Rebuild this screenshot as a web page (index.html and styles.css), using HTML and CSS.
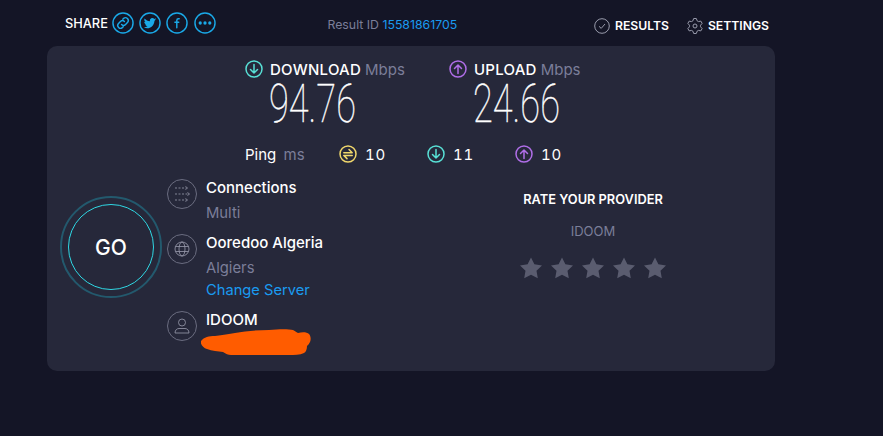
FILE: index.html
```html
<!DOCTYPE html>
<html lang="en">
<head>
    <meta charset="UTF-8">
    <meta name="viewport" content="width=device-width, initial-scale=1.0">
    <title>Speedtest Result</title>
    <link rel="stylesheet" href="styles.css">
</head>
<body>
<div class="page">
    <header class="top-bar">
        <div class="share">
            <span class="share-label">SHARE</span>
            <svg class="share-icon" viewBox="0 0 23 23"><circle cx="11.5" cy="11.5" r="10.5"/><path d="M10 13a3 3 0 0 0 4.2 0l2.2-2.2a3 3 0 0 0-4.2-4.2l-.9.9M13 10a3 3 0 0 0-4.2 0l-2.2 2.2a3 3 0 0 0 4.2 4.2l.9-.9"/></svg>
            <svg class="share-icon" viewBox="0 0 23 23"><circle cx="11.5" cy="11.5" r="10.5"/><path class="fill" d="M18 7.6c-.5.2-1 .4-1.5.4.6-.3 1-.8 1.2-1.4-.5.3-1.1.5-1.7.6a2.7 2.7 0 0 0-4.6 2.5c-2.2-.1-4.2-1.2-5.5-2.8-.7 1.2-.4 2.8.8 3.6-.4 0-.8-.1-1.2-.3 0 1.300.9 2.400 2.100 2.700-.4.100-.8.100-1.200 0 .3 1.100 1.300 1.800 2.500 1.900-1.100.9-2.500 1.200-3.900 1.100 3.700 2.300 10.300 1.200 11.200-6.500 0-.2.900-.9 1.800-1.800z"/></svg>
            <svg class="share-icon" viewBox="0 0 23 23"><circle cx="11.5" cy="11.5" r="10.5"/><path d="M13.8 7h-.8c-1.100 0-1.700.7-1.700 1.800V16.500M9.300 10.800h4"/></svg>
            <svg class="share-icon" viewBox="0 0 23 23"><circle cx="11.5" cy="11.5" r="10.5"/><circle class="fill" cx="6.5" cy="11.5" r="1.7"/><circle class="fill" cx="11.5" cy="11.5" r="1.7"/><circle class="fill" cx="16.5" cy="11.5" r="1.7"/></svg>
        </div>
        <div class="result-id">Result ID <a class="result-link">15581861705</a></div>
        <nav class="top-nav">
            <span class="nav-item">
                <svg class="nav-icon" viewBox="0 0 16 16"><circle cx="8" cy="8" r="7.3"/><path d="M5 8.300l2.200 2.100L11 6"/></svg>
                RESULTS
            </span>
            <span class="nav-item">
                <svg class="nav-icon" viewBox="0 0 16 16"><circle cx="8" cy="8" r="2"/><polygon points="6.68,.52 9.32,.52 10.1,2.81 11.44,3.58 13.82,3.12 15.14,5.4 13.54,7.22 13.54,8.78 15.14,10.6 13.82,12.88 11.44,12.42 10.1,13.19 9.32,15.48 6.68,15.48 5.9,13.19 4.56,12.42 2.18,12.88 .86,10.6 2.46,8.78 2.46,7.22 .86,5.4 2.18,3.12 4.56,3.58 5.9,2.81"/></svg>
                SETTINGS
            </span>
        </nav>
    </header>

    <main class="card">
        <section class="speeds">
            <div class="speed">
                <div class="speed-head">
                    <svg class="stat-icon teal" viewBox="0 0 18 18"><circle cx="9" cy="9" r="8"/><path d="M9 4.500v8.500M5.500 9.500L9 13l3.500-3.500"/></svg>
                    <span class="speed-name">DOWNLOAD</span> <span class="unit">Mbps</span>
                </div>
                <div class="speed-value"><span class="digits">94.76</span></div>
            </div>
            <div class="speed">
                <div class="speed-head">
                    <svg class="stat-icon purple" viewBox="0 0 18 18"><circle cx="9" cy="9" r="8"/><path d="M9 13.500V5M5.500 8.500L9 5l3.500 3.500"/></svg>
                    <span class="speed-name">UPLOAD</span> <span class="unit">Mbps</span>
                </div>
                <div class="speed-value"><span class="digits">24.66</span></div>
            </div>
        </section>

        <section class="ping-row">
            <div class="ping-label">Ping <span class="unit ping-unit">ms</span></div>
            <div class="ping-stat">
                <svg class="stat-icon yellow" viewBox="0 0 18 18"><circle cx="9" cy="9" r="8"/><path d="M4.800 7.800h8.400L10 4.500M13.200 10.400H4.800L8 13.600"/></svg>
                <span>10</span>
            </div>
            <div class="ping-stat">
                <svg class="stat-icon teal" viewBox="0 0 18 18"><circle cx="9" cy="9" r="8"/><path d="M9 4.500v8.500M5.500 9.500L9 13l3.500-3.500"/></svg>
                <span>11</span>
            </div>
            <div class="ping-stat">
                <svg class="stat-icon purple" viewBox="0 0 18 18"><circle cx="9" cy="9" r="8"/><path d="M9 13.500V5M5.500 8.500L9 5l3.500 3.500"/></svg>
                <span>10</span>
            </div>
        </section>

        <section class="details">
            <div class="go-wrap">
                <div class="go-ring"><div class="go-btn">GO</div></div>
            </div>

            <div class="servers">
                <div class="server server-conn">
                    <svg class="server-icon" viewBox="0 0 30 30"><circle cx="15" cy="15" r="14.500"/><g class="thin"><path d="M8 9h11M8 15h13M8 21h11" stroke-dasharray="2 1.500"/><path d="M18.500 7.500l2 1.500-2 1.500M20.500 13.500l2 1.500-2 1.500M18.500 19.500l2 1.500-2 1.500"/></g></svg>
                    <div class="server-text">
                        <div class="server-name">Connections</div>
                        <div class="server-sub">Multi</div>
                    </div>
                </div>
                <div class="server server-host">
                    <svg class="server-icon" viewBox="0 0 30 30"><circle cx="15" cy="15" r="14.500"/><g class="thin"><circle cx="15" cy="15" r="7"/><ellipse cx="15" cy="15" rx="3" ry="7"/><path d="M8.500 12.500h13M8.500 17.500h13"/></g></svg>
                    <div class="server-text">
                        <div class="server-name">Ooredoo Algeria</div>
                        <div class="server-sub">Algiers</div>
                        <a class="change-link">Change Server</a>
                    </div>
                </div>
                <div class="server server-isp">
                    <svg class="server-icon" viewBox="0 0 30 30"><circle cx="15" cy="15" r="14.500"/><g class="thin"><circle cx="15" cy="11.500" r="3.500"/><path d="M8 22c0-3 2-4.500 4-4.500h6c2 0 4 1.500 4 4.500z"/></g></svg>
                    <div class="server-text">
                        <div class="server-name">IDOOM</div>
                    </div>
                    <svg class="scribble" viewBox="0 0 110 26"><path d="M0 12C3 8 8 7 14 7 22 6 28 5 34 4 44 2 56 1 68 1 78 0 88 0 92 1c2 1 3 2 5 3 4-1 9-1 11 1 2 2 2 6 1 8-1 2-2 3-3 4 0 3-1 6-3 7-4 2-10 2-15 2H30c-3 0-5-1-8-3-5-1-11-1-16-3C2 19-1 15 0 12z"/></svg>
                </div>
            </div>

            <aside class="rate">
                <div class="rate-title">RATE YOUR PROVIDER</div>
                <div class="rate-isp">IDOOM</div>
                <div class="stars">
                    <svg class="star" viewBox="2 2 20 19.200"><path d="M12 2l3.090 6.260L22 9.270l-5 4.870 1.180 6.880L12 17.770l-6.180 3.250L7 14.140 2 9.270l6.910-1.010z"/></svg>
                    <svg class="star" viewBox="2 2 20 19.200"><path d="M12 2l3.090 6.260L22 9.270l-5 4.870 1.180 6.880L12 17.770l-6.180 3.250L7 14.140 2 9.270l6.910-1.010z"/></svg>
                    <svg class="star" viewBox="2 2 20 19.200"><path d="M12 2l3.090 6.260L22 9.270l-5 4.870 1.180 6.880L12 17.770l-6.180 3.250L7 14.140 2 9.270l6.910-1.010z"/></svg>
                    <svg class="star" viewBox="2 2 20 19.200"><path d="M12 2l3.090 6.260L22 9.270l-5 4.870 1.180 6.880L12 17.770l-6.180 3.250L7 14.140 2 9.270l6.910-1.010z"/></svg>
                    <svg class="star" viewBox="2 2 20 19.200"><path d="M12 2l3.090 6.260L22 9.270l-5 4.870 1.180 6.880L12 17.770l-6.180 3.250L7 14.140 2 9.270l6.910-1.010z"/></svg>
                </div>
            </aside>
        </section>
    </main>
</div>
</body>
</html>
```

FILE: styles.css
```css
* {
    margin: 0;
    padding: 0;
    box-sizing: border-box;
}

body {
    font-family: Inter, 'Open Sans', sans-serif;
    background: #141526;
    color: #fff;
    min-height: 100vh;
    overflow: hidden;
}

svg {
    display: block;
    flex: none;
    fill: none;
}

.page {
    width: 728px;
    margin-left: 47px;
}

/* Top bar */
.top-bar {
    height: 46px;
    display: flex;
    align-items: center;
    padding: 0 6px 0 18px;
    font-size: 13px;
}

.share {
    display: flex;
    align-items: center;
    width: 263px;
    margin-top: -1px;
}

.share-label {
    font-size: 12.800px;
    font-weight: 500;
    margin-right: 4px;
    margin-top: 2px;
}

.share-icon {
    width: 22px;
    height: 22px;
    margin-right: 5.300px;
    stroke: #1aa9e8;
    stroke-width: 1.500;
    stroke-linecap: round;
}

.share-icon .fill {
    fill: #1aa9e8;
    stroke: none;
}

.result-id {
    color: #7b7e99;
    width: 267px;
    font-size: 12.300px;
    margin-top: 3px;
}

.result-link {
    color: #1a9bf0;
}

.top-nav {
    display: flex;
    gap: 18px;
    margin-top: 5px;
}

.nav-item {
    display: flex;
    align-items: center;
    gap: 5px;
    font-weight: 600;
    font-size: 12.200px;
}

.nav-icon {
    width: 16px;
    height: 16px;
    stroke: #9a9cad;
    stroke-width: 1;
    stroke-linejoin: round;
}

/* Card */
.card {
    background: #26283a;
    border-radius: 10px;
    height: 325px;
    padding-top: 13px;
}

.speeds {
    display: flex;
    padding-left: 198px;
}

.speed {
    width: 204px;
}

.speed-head {
    display: flex;
    align-items: center;
    gap: 7px;
    font-size: 15px;
    height: 20px;
}

.speed-name {
    font-weight: 500;
    letter-spacing: 0.250px;
}

.unit {
    color: #7b7e99;
}

.speed-head .unit {
    margin-left: -3px;
}

.speed-value {
    height: 50px;
    padding-left: 24px;
}

.digits {
    display: inline-block;
    font-family: Roboto, sans-serif;
    font-weight: 100;
    font-size: 54px;
    line-height: 50px;
    transform: scaleX(0.67);
    transform-origin: left center;
    -webkit-text-stroke: 0.4px #fff;
}

.stat-icon {
    width: 18px;
    height: 18px;
    stroke-width: 1.500;
    stroke-linecap: round;
    stroke-linejoin: round;
}

.teal { stroke: #58e0d6; }
.purple { stroke: #b06ee8; }
.yellow { stroke: #f0d76c; }

.ping-row {
    display: flex;
    align-items: center;
    padding-left: 198px;
    margin-top: 15px;
    height: 20px;
    font-size: 15px;
}

.ping-label {
    width: 94px;
}

.ping-unit {
    margin-left: 3px;
}

.ping-stat {
    display: flex;
    align-items: center;
    gap: 8px;
    width: 88px;
    font-size: 15px;
    letter-spacing: 0.800px;
    font-variant-numeric: tabular-nums;
}

/* Lower part */
.details {
    display: flex;
    margin-top: 15px;
}

.go-wrap {
    width: 120px;
    padding: 17px 0 0 13px;
}

.go-ring {
    width: 102px;
    height: 102px;
    border: 2px solid #23596d;
    border-radius: 50%;
    display: flex;
    align-items: center;
    justify-content: center;
}

.go-btn {
    width: 86px;
    height: 86px;
    border: 1px solid #2fd8e4;
    border-radius: 50%;
    display: flex;
    align-items: center;
    justify-content: center;
    font-size: 21px;
    font-weight: 500;
}

.servers {
    width: 300px;
}

.server {
    display: flex;
    gap: 9px;
    position: relative;
}

.server-conn {
    height: 55px;
}

.server-host {
    height: 77px;
}

.server-icon {
    width: 30px;
    height: 30px;
    stroke: #6b6d80;
    stroke-width: 1;
}

.server-icon .thin {
    stroke: #9a9cad;
    stroke-width: 0.800;
}

.server-name {
    font-size: 15px;
    font-weight: 500;
    line-height: 18px;
}

.server-sub {
    color: #7b7e99;
    font-size: 14.800px;
    line-height: 18px;
    margin-top: 7px;
}

.change-link {
    display: block;
    color: #1a9bf0;
    font-size: 14.700px;
    line-height: 18px;
    margin-top: 4px;
}

.scribble {
    position: absolute;
    left: 34px;
    top: 18px;
    width: 110px;
    height: 26px;
    fill: #ff5c00;
}

.rate {
    width: 200px;
    margin-left: 26px;
    text-align: center;
    padding-top: 12px;
}

.rate-title {
    font-size: 12.800px;
    font-weight: 600;
    line-height: 18px;
}

.rate-isp {
    color: #7b7e99;
    font-size: 13px;
    line-height: 18px;
    margin-top: 13px;
}

.stars {
    display: flex;
    justify-content: center;
    gap: 9px;
    margin-top: 17px;
}

.star {
    width: 22px;
    height: 22px;
    fill: #5a5c6f;
}
```
